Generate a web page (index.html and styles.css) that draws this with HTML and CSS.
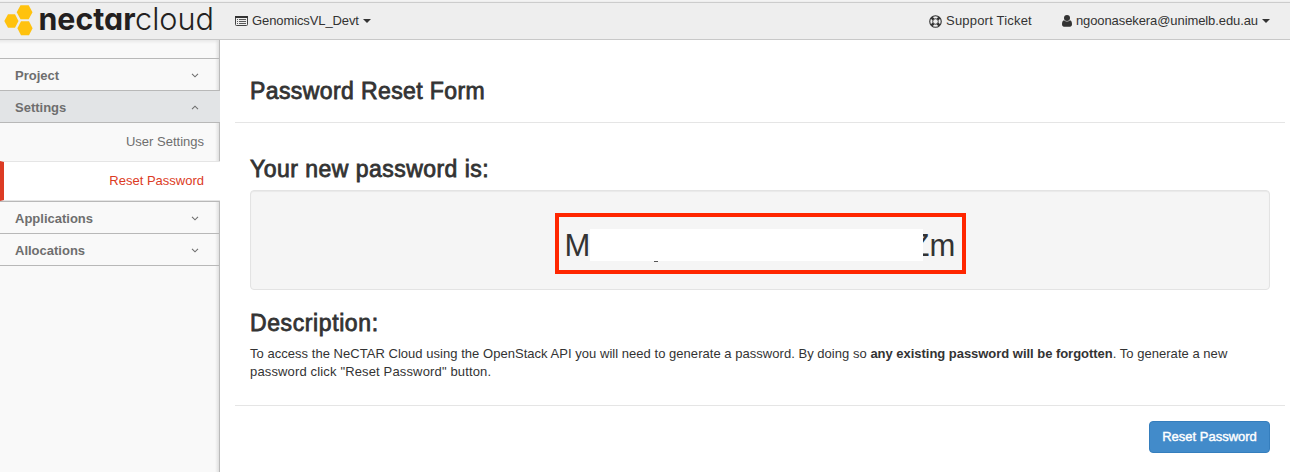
FILE: index.html
```html
<!DOCTYPE html>
<html lang="en">
<head>
<meta charset="utf-8">
<title>Password Reset Form</title>
<link rel="stylesheet" href="styles.css">
</head>
<body>
<header class="topbar">
  <svg class="logo" width="220" height="37" viewBox="0 0 220 37" role="img" aria-label="nectarcloud">
    <g fill="#ffc20e">
      <path d="M8 12.300h7l3.500 6.700-3.500 6.700H8L4.300 19z"/>
      <path d="M20.500 3.200h8.200l3.800 7-3.800 7h-8.200l-3.800-7z"/>
      <path d="M21 19.300h8l3.600 7-3.600 7h-8l-3.600-7z"/>
    </g>
    <text class="logo-bold" x="38.500" y="27.500" textLength="97" lengthAdjust="spacingAndGlyphs">nectar</text>
    <text class="logo-light" x="135" y="27.500" textLength="79" lengthAdjust="spacingAndGlyphs">cloud</text>
  </svg>
  <a class="project">
    <svg width="13" height="12" viewBox="0 0 13 12"><rect x=".5" y="1.500" width="12" height="9" rx="1" fill="none" stroke="#444"/><path d="M0 1h13v2H0z" fill="#333"/><path d="M2 4.500h1M4 4.500h7M2 6.500h1M4 6.500h7M2 8.500h1M4 8.500h7" stroke="#333" stroke-width=".8"/></svg>
    <span class="project-name">GenomicsVL_Devt</span><i class="caret"></i>
  </a>
  <a class="support">
    <svg width="13" height="13" viewBox="0 0 14 14" fill="none" stroke="#333"><circle cx="7" cy="7" r="6.200" stroke-width="1.200"/><circle cx="7" cy="7" r="3"/><path d="M2.800 2.800l2 2M9.200 9.200l2 2M11.200 2.800l-2 2M4.800 9.200l-2 2" stroke-width="2.800"/></svg>
    <span class="support-label">Support Ticket</span>
  </a>
  <a class="user">
    <svg width="10" height="12" viewBox="0 0 10 12" fill="#333"><circle cx="5" cy="3" r="3"/><path d="M2 5.200C.6 5.500 0 7 0 9.300 0 11 .8 11.700 2 11.700h6c1.200 0 2-.7 2-2.400 0-2.300-.6-3.800-2-4.100C6.300 6.900 3.700 6.900 2 5.200z"/></svg>
    <span class="email">ngoonasekera@unimelb.edu.au</span><i class="caret"></i>
  </a>
</header>
<div class="page">
  <nav class="sidebar">
    <div class="group">Project<svg class="chevron" width="8" height="5" viewBox="0 0 8 5"><path d="M1 .8l3 3 3-3"/></svg></div>
    <div class="group open">Settings<svg class="chevron" width="8" height="5" viewBox="0 0 8 5"><path d="M1 4.200l3-3 3 3"/></svg></div>
    <div class="item">User Settings</div>
    <div class="item active">Reset Password</div>
    <div class="group">Applications<svg class="chevron" width="8" height="5" viewBox="0 0 8 5"><path d="M1 .8l3 3 3-3"/></svg></div>
    <div class="group last">Allocations<svg class="chevron" width="8" height="5" viewBox="0 0 8 5"><path d="M1 .8l3 3 3-3"/></svg></div>
  </nav>
  <main class="content">
    <div class="title"><h2>Password Reset Form</h2></div>
    <section class="body">
      <h2 class="new-password">Your new password is:</h2>
      <div class="well">
        <div class="highlight"><span class="head">M</span><span class="mask"></span><span class="tail">Zm</span></div>
      </div>
      <h2 class="description">Description:</h2>
      <p>To access the NeCTAR Cloud using the OpenStack API you will need to generate a password. By doing so <b>any existing password will be forgotten</b>. To generate a new<br><span class="line-two">password click "Reset Password" button.</span></p>
    </section>
    <footer class="actions"><button class="button" type="button">Reset Password</button></footer>
  </main>
</div>
</body>
</html>
```
FILE: styles.css
```css
* { box-sizing: border-box; }
body {
  margin: 0;
  height: 472px;
  overflow: hidden;
  background: #fff;
  color: #333;
  font: 13px/18px "Liberation Sans", Arial, sans-serif;
}
.topbar {
  display: flex;
  height: 40px;
  padding: 1px 20px 0 0;
  align-items: center;
  background: #eee;
  border-top: 1px solid #f3f3f3;
  border-bottom: 1px solid #c8c8c8;
  box-shadow: inset 0 1px #eee, inset 0 2px #ccc;
}
.topbar a { display: flex; padding-top: 1px; align-items: center; white-space: nowrap; }
.topbar a svg { flex: none; margin-right: 4px; }
.logo { flex: none; overflow: visible; }
.logo text { font-family: Inter, sans-serif; font-feature-settings: "cv11"; fill: #231f20; }
.logo .logo-bold { font-size: 31px; font-weight: 700; }
.logo .logo-light { font-size: 31px; font-weight: 300; }
.project { margin-left: 15px; }
.project-name { letter-spacing: -.1px; }
.support { margin-left: auto; }
.support-label { letter-spacing: .2px; }
.user { margin-left: 30px; }
.email { letter-spacing: -.09px; }
.caret {
  margin-left: 4px;
  border: 4px solid transparent;
  border-top-color: #333;
  border-bottom: 0;
}
.page { display: flex; height: 432px; }
.sidebar {
  width: 220px;
  padding-top: 18px;
  flex: none;
  background:
    linear-gradient(to left, #e0e0e0, rgba(249, 249, 249, 0) 4px),
    linear-gradient(#e9e9e9, #f9f9f9 4px);
  border-right: 1px solid #bbb;
}
.group {
  display: flex;
  height: 32px;
  padding: 2px 20px 0 15px;
  align-items: center;
  justify-content: space-between;
  border-top: 1px solid #b8b8b8;
  color: #6e6e6e;
  font-weight: bold;
}
.group.open { height: 33px; margin-right: -1px; padding-right: 21px; background: #e2e4e6; border-bottom: 1px solid #b8b8b8; }
.group.last { height: 33px; border-bottom: 1px solid #b8b8b8; }
.chevron { fill: none; stroke: #6e6e6e; stroke-width: 1.1; }
.item {
  height: 38px;
  padding: 0 15px;
  color: #6e6e6e;
  line-height: 37px;
  text-align: right;
}
.item.active {
  height: 40px;
  margin-right: -1px;
  padding-right: 16px;
  background: #fff;
  border-top: 1px solid #e5e5e5;
  border-bottom: 1px solid #e5e5e5;
  border-left: 4px solid #dc3b24;
  color: #dc3b24;
}
.content { width: 1050px; margin-left: 15px; }
h2 {
  margin: 0;
  font-size: 23px;
  line-height: 26px;
  font-weight: 400;
  letter-spacing: .4px;
  white-space: nowrap;
  -webkit-text-stroke: .8px #333;
}
.title { height: 83px; padding: 38px 15px 0; border-bottom: 1px solid #e5e5e5; }
.body { height: 282px; padding: 33px 15px 0; }
.new-password { letter-spacing: .47px; }
.well {
  display: flex;
  height: 100px;
  margin-top: 8px;
  padding-top: 22px;
  align-items: flex-start;
  justify-content: center;
  background: #f5f5f5;
  border: 1px solid #e3e3e3;
  border-radius: 4px;
  box-shadow: inset 0 1px 1px rgba(0, 0, 0, .05);
}
.highlight {
  display: flex;
  width: 411px;
  height: 61px;
  padding: 2px 6px 0 6px;
  align-items: center;
  border: 4px solid #ff2600;
  font-size: 31px;
  line-height: 36px;
}
.head { width: 25px; padding-top: 3px; }
.mask { position: relative; z-index: 1; flex: none; width: 333px; height: 32px; background: #fff; }
/* descender left visible below the redaction */
.mask::after {
  content: "";
  position: absolute;
  left: 64px;
  top: 32px;
  width: 4px;
  height: 1px;
  background: #555;
}
.tail { flex: none; margin-left: -12px; padding-top: 3px; }
.description { margin-top: 20px; letter-spacing: .6px; }
p { margin: 9px 0 0; white-space: nowrap; letter-spacing: .035px; }
p b { letter-spacing: -.03px; }
.line-two { letter-spacing: .15px; }
.actions { display: flex; padding: 15px 15px 0; justify-content: flex-end; border-top: 1px solid #e5e5e5; }
.button {
  width: 121px;
  height: 32px;
  padding: 0;
  background: #428bca;
  border: 1px solid #357ebd;
  border-radius: 4px;
  color: #fff;
  font: 13px/18px "Liberation Sans", Arial, sans-serif;
  -webkit-text-stroke: .4px #fff;
}
```
